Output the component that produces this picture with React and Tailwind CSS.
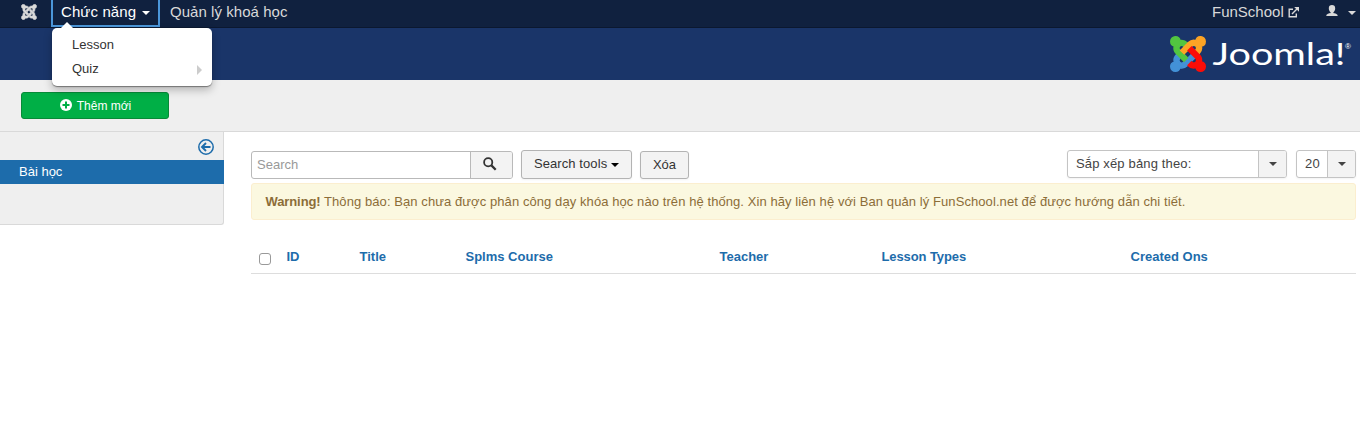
import React from "react";

const KNOT = {
  green: "M.6 92.1C.6 58.8 27.4 32 60.4 32c30 0 54.5 21.9 59.2 50.2 32.6-7.6 67.1.6 96.5 30l-44.3 44.3c-20.5-20.5-42.6-16.3-55.4-3.5-14.3 14.3-14.3 37.9 0 52.2l99.5 99.5-44 44.3c-87.7-87.2-49.7-49.7-99.8-99.7-26.8-26.5-35-64.8-24.8-98.9C20.4 144.6.6 120.7.6 92.1z",
  orange: "M130.1 208.5l44.3 44.3c10-10 89.7-89.7 99.7-99.8 14.3-14.3 37.6-14.3 51.9 0 12.8 12.8 17 35-3.5 55.4l44 44.3c31.2-31.2 38.5-67.6 28.9-101.2 29.2-4.1 51.9-29.2 51.9-59.5 0-33.2-26.8-60.1-59.8-60.1-30.3 0-55.4 22.5-59.5 51.6-33.8-9.9-71.7-1.5-98.3 25.1-18.3 19.1-71.1 71.5-99.6 99.9z",
  red: "M396.4 360.7c8.2-32.7-.9-68.5-26.3-93.9-11.8-12.2 5 4.7-99.5-99.7l-44.3 44.3 99.7 99.7c14.3 14.3 14.3 37.6 0 51.9-12.8 12.8-35 17-55.4-3.5l-44 44.3c27.6 30.2 68 38.8 102.7 28 5.5 27.4 29.7 48.1 58.9 48.1 33 0 59.8-26.8 59.8-60.1 0-30.2-22.5-55-51.6-59.1z",
  blue: "M312.1 307.6l-44-44.3c-87 86.4-50.4 50.4-99.7 99.8-14.3 14.3-37.6 14.3-51.9 0-13.1-13.4-16.9-35.3 3.2-55.4l-44-44.3c-30.2 30.2-38 65.2-29.5 98.3-26.7 6-46.2 29.9-46.2 58.2C0 453.2 26.8 480 59.8 480c28.6 0 52.5-19.8 58.6-46.7 32.7 8.2 68.5-.6 94.2-26 32.1-32 12.2-12.4 99.5-99.7z",
};

function Knot({ className, green, orange, red, blue, weight }) {
  return (
    <svg viewBox="-10 22 468 468" className={className} strokeWidth={weight}>
      <path d={KNOT.blue} fill={blue} stroke={blue} />
      <path d={KNOT.green} fill={green} stroke={green} />
      <path d={KNOT.orange} fill={orange} stroke={orange} />
      <path d={KNOT.red} fill={red} stroke={red} />
    </svg>
  );
}

function Caret({ className }) {
  return (
    <svg viewBox="0 0 8 4" className={`h-1 w-2 shrink-0 ${className}`} fill="currentColor">
      <path d="M0 0h8L4 4z" />
    </svg>
  );
}

function Navbar() {
  return (
    <nav className="flex h-7 shrink-0 border-b border-[#0b1830] bg-[#10213f] text-[15px] leading-[24px] text-[#d9d9d9]">
      <Knot className="ml-[21px] mt-1 h-4 w-4" weight="16" green="#d9d9d9" orange="#d9d9d9" red="#d9d9d9" blue="#d9d9d9" />
      <div className="relative ml-[14px] w-[109px] border-2 border-t-0 border-[#4b96d9]">
        <div className="flex pl-2 text-white">
          <span className="w-[76px] whitespace-nowrap tracking-[0.1px]">Chức năng</span>
          <Caret className="ml-[5px] mt-[11px]" />
        </div>
        <DropMenu />
      </div>
      <span className="ml-[10px] whitespace-nowrap tracking-[0.05px]">Quản lý khoá học</span>
      <div className="ml-auto flex">
        <span className="w-[72px] whitespace-nowrap">FunSchool</span>
        <svg viewBox="0 0 11 11" className="ml-[4px] mt-[7px] h-[11px] w-[11px]" fill="none" stroke="currentColor" strokeWidth="1.4">
          <path d="M5 2.2H1.2v7.600h7.100V6.500M4 7l5.200-5.200" />
          <path d="M6.200 0H11v4.800z" fill="currentColor" stroke="none" />
        </svg>
        <svg viewBox="0 0 12 12" className="ml-[27px] mt-[5px] h-3 w-3" fill="currentColor">
          <path d="M6 0c2 0 3.200 1.200 3.200 3.200S8.200 6.600 7.400 7.200v.9c1.400.4 4.300.8 4.300 2.900H.3c0-2.100 2.900-2.500 4.300-2.900v-.9C3.800 6.600 2.800 5.200 2.800 3.200S4 0 6 0z" />
        </svg>
        <Caret className="ml-[10px] mr-1 mt-[11px]" />
      </div>
    </nav>
  );
}

function DropMenu() {
  return (
    <div className="absolute -left-px top-7 z-10 h-[58px] w-[160px] rounded-[5px] bg-white pt-[5px] text-[13px] leading-6 text-[#333] shadow-[0_1px_1px_rgba(0,0,0,0.4),0_4px_9px_rgba(0,0,0,0.25)]">
      <svg viewBox="0 0 12 6" className="absolute -top-[6px] left-[9px] h-[6px] w-3" fill="#fff">
        <path d="M0 6l6-6 6 6z" />
      </svg>
      <div className="px-5">Lesson</div>
      <div className="flex items-center justify-between pl-5 pr-[10px]">
        <span>Quiz</span>
        <svg viewBox="0 0 5 10" className="mt-[2px] h-[10px] w-[5px]" fill="#ccc">
          <path d="M0 0l5 5-5 5z" />
        </svg>
      </div>
    </div>
  );
}

function Header() {
  return (
    <header className="flex h-[52px] shrink-0 justify-end bg-[#1a3569]">
      <Knot className="mt-2 h-9 w-9" weight="20" green="#52c540" orange="#fda425" red="#fb0d08" blue="#4391d7" />
      <svg viewBox="0 0 146 44" className="ml-[3px] mt-2 h-11 w-[146px]" fill="#fff">
        <text x="3.500" y="29" fontFamily="Lato, sans-serif" fontSize="30" textLength="133" lengthAdjust="spacingAndGlyphs">Joomla!</text>
        <text x="136" y="12.500" fontFamily="Liberation Sans, sans-serif" fontSize="8">®</text>
      </svg>
      <div className="w-[5px]" />
    </header>
  );
}

function Sidebar() {
  return (
    <aside className="h-[93px] w-[224px] rounded-br-[3px] border-b border-r border-[#d9d9d9] bg-[#efefef] text-[13px]">
      <div className="flex h-7 justify-end pr-[9px] pt-[7px]">
        <svg viewBox="0 0 16 16" className="h-4 w-4" fill="none" stroke="#1d6cab">
          <circle cx="8" cy="8" r="7.200" strokeWidth="1.500" />
          <path d="M12.500 8H4.500M8 4L4 8l4 4" strokeWidth="1.900" />
        </svg>
      </div>
      <div className="-mr-px h-6 bg-[#1d6cab] pl-[19px] leading-[24px] text-white">Bài học</div>
    </aside>
  );
}

function Select({ label, className, arrow }) {
  return (
    <div className={`flex h-7 rounded-[3px] border border-[#c4c4c4] bg-white text-[#444] shadow-[0_1px_2px_rgba(0,0,0,0.05)] ${className}`}>
      <span className="flex-1 whitespace-nowrap pl-2 leading-[26px] tracking-[0.15px]">{label}</span>
      <span className={`flex justify-center rounded-r-[2px] border-l border-[#c4c4c4] bg-[#f3f3f3] pt-[11px] ${arrow}`}>
        <Caret className="" />
      </span>
    </div>
  );
}

function Toolbar() {
  return (
    <div className="flex h-[29px]">
      <div className="mt-px flex h-7 w-[262px] rounded-[3px] border border-[#b9b9b9]">
        <span className="w-[218px] pl-[5px] leading-[26px] text-[#999]">Search</span>
        <span className="flex-1 rounded-r-[2px] border-l border-[#b9b9b9] bg-[#f3f3f3] pl-3 pt-[5px]">
          <svg viewBox="0 0 14 14" className="h-[14px] w-[14px]" fill="none" stroke="#333">
            <circle cx="5.200" cy="5.200" r="4.100" strokeWidth="1.800" />
            <path d="M8.400 8.400l4.300 4.300" strokeWidth="2.300" />
          </svg>
        </span>
      </div>
      <div className="ml-2 flex w-[111px] rounded-[3px] border border-[#b3b3b3] bg-[#f3f3f3] pl-3 leading-[26px] text-[#333] shadow-[0_1px_2px_rgba(0,0,0,0.05)]">
        <span className="w-[73px] whitespace-nowrap tracking-[0.08px]">Search tools</span>
        <Caret className="ml-1 mt-[12px] text-black" />
      </div>
      <div className="ml-2 mt-px h-7 w-[49px] rounded-[3px] border border-[#b3b3b3] bg-[#f3f3f3] text-center leading-[26px] text-[#333] shadow-[0_1px_2px_rgba(0,0,0,0.05)]">Xóa</div>
      <Select label="Sắp xếp bảng theo:" className="ml-auto w-[220px]" arrow="w-[28px]" />
      <Select label="20" className="ml-[9px] w-[60px]" arrow="w-[28px]" />
    </div>
  );
}

function Content() {
  return (
    <main className="flex-1 pl-[27px] pr-1 pt-[18px] text-[13px]">
      <Toolbar />
      <div className="mt-1 h-[37px] whitespace-nowrap rounded-[3px] border border-[#fbeecf] bg-[#fbf8e0] pl-[13.500px] leading-[36px] tracking-[0.08px] text-[#8c6d38]">
        <b className="tracking-[-0.1px]">Warning!</b> Thông báo: Bạn chưa được phân công dạy khóa học nào trên hệ thống. Xin hãy liên hệ với Ban quản lý FunSchool.net để được hướng dẫn chi tiết.
      </div>
      <div className="mt-[18px] grid h-9 grid-cols-[35.500px_73px_106px_254px_162px_249px_1fr] border-b border-[#ddd] pt-[9px] font-bold leading-5 text-[#1d6cab]">
        <span className="ml-2 mt-[6px] h-3 w-3 rounded-[3px] border border-[#999] bg-white" />
        <span>ID</span>
        <span>Title</span>
        <span>Splms Course</span>
        <span>Teacher</span>
        <span className="tracking-[-0.1px]">Lesson Types</span>
        <span>Created Ons</span>
      </div>
    </main>
  );
}

export default function App() {
  return (
    <div className="flex h-[422px] w-[1360px] flex-col overflow-hidden bg-white font-['Liberation_Sans',Arial,sans-serif]">
      <Navbar />
      <Header />
      <div className="h-[52px] shrink-0 border-b border-[#d9d9d9] bg-[#efefef] pl-[21px] pt-3">
        <button className="flex h-[27px] w-[148px] justify-center gap-[5px] rounded-[3px] border border-[#078a38] bg-[#00af46] text-[12px] leading-[26px] text-white">
          <svg viewBox="0 0 12 12" className="ml-px mt-[6px] h-3 w-3">
            <circle cx="6" cy="6" r="6" fill="#fff" />
            <path d="M6 2.500v7M2.500 6h7" stroke="#00af46" strokeWidth="2" />
          </svg>
          <span>Thêm mới</span>
        </button>
      </div>
      <div className="flex flex-1">
        <Sidebar />
        <Content />
      </div>
    </div>
  );
}
